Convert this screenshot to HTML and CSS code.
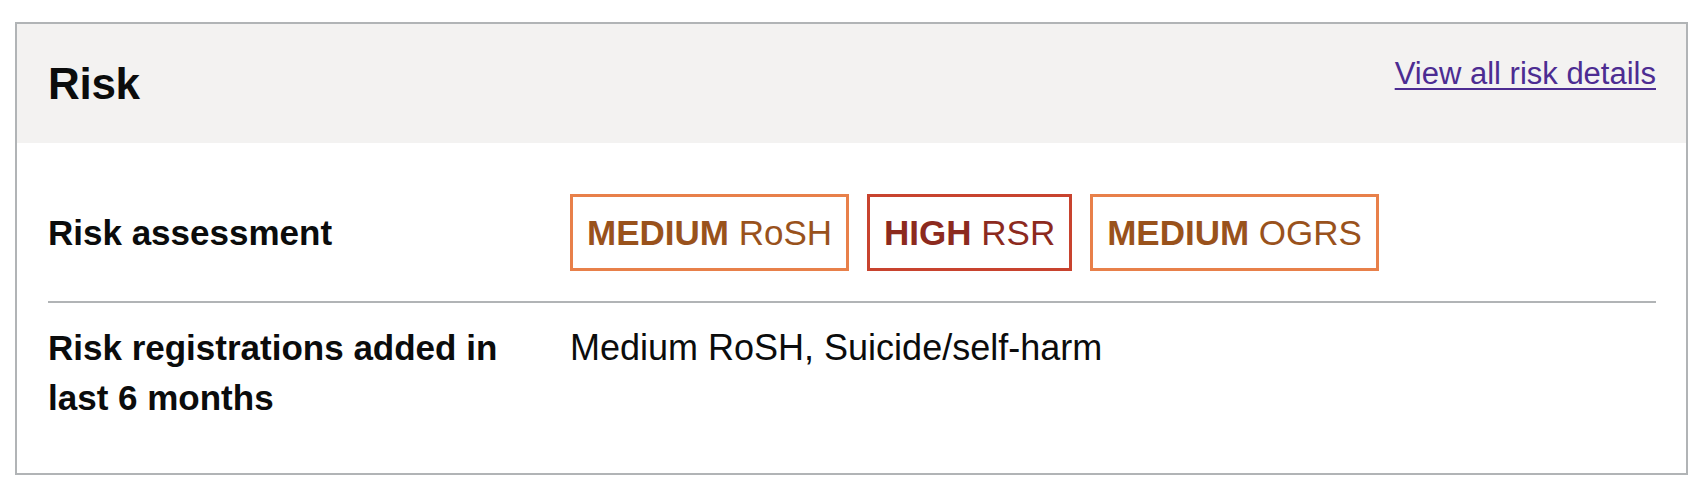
FILE: index.html
```html
<!DOCTYPE html>
<html lang="en">
<head>
<meta charset="utf-8">
<title>Risk</title>
<link rel="stylesheet" href="styles.css">
</head>
<body>
<div class="card">
  <div class="card-header">
    <h2 class="card-title">Risk</h2>
    <a class="card-link" href="#">View all risk details</a>
  </div>
  <div class="card-content">
    <dl class="summary">
      <div class="summary-row summary-row--center summary-row--first">
        <dt class="summary-key">Risk assessment</dt>
        <dd class="summary-value">
          <div class="tags">
            <span class="tag tag--medium"><strong>MEDIUM</strong> RoSH</span>
            <span class="tag tag--high"><strong>HIGH</strong> RSR</span>
            <span class="tag tag--medium"><strong>MEDIUM</strong> OGRS</span>
          </div>
        </dd>
      </div>
      <div class="summary-row summary-row--last">
        <dt class="summary-key">Risk registrations added in last 6 months</dt>
        <dd class="summary-value">Medium RoSH, Suicide/self-harm</dd>
      </div>
    </dl>
  </div>
</div>
</body>
</html>
```

FILE: styles.css
```css
* { box-sizing: border-box; }

html, body {
  margin: 0;
  padding: 0;
  background: #ffffff;
}

body {
  font-family: "Liberation Sans", Arial, sans-serif;
  color: #0b0c0c;
  padding: 22px 20px 0 15px;
}

.card {
  border: 2px solid #b1b4b6;
  background: #ffffff;
}

.card-header {
  background: #f3f2f1;
  display: flex;
  justify-content: space-between;
  align-items: flex-start;
  padding: 30px 30px 29px 31px;
}

.card-title {
  margin: 0;
  font-size: 44px;
  line-height: 60px;
  font-weight: 700;
  letter-spacing: -0.3px;
}

.card-link {
  font-size: 31px;
  line-height: 40px;
  color: #4c2c92;
  text-decoration: underline;
  text-decoration-thickness: 2px;
  text-underline-offset: 4px;
}

.card-content {
  padding: 30px 30px 30px 31px;
}

.summary {
  margin: 0;
}

.summary-row {
  display: grid;
  grid-template-columns: 522px 1fr;
  align-items: start;
  padding: 20px 0;
}

.summary-row--first {
  padding: 21px 0 30px;
  border-bottom: 2px solid #b1b4b6;
}

.summary-row--center {
  align-items: center;
}

.summary-key {
  margin: 0;
  font-size: 35px;
  line-height: 50px;
  font-weight: 700;
  padding-right: 40px;
}

.summary-value {
  margin: 0;
  font-size: 36px;
  line-height: 50px;
}

.tags {
  display: flex;
  gap: 18px;
}

.tag {
  display: inline-block;
  border: 3px solid;
  padding: 13px 14px;
  font-size: 35px;
  line-height: 45px;
  white-space: nowrap;
}

.tag strong {
  font-weight: 700;
}

.tag--medium {
  border-color: #e8804a;
  color: #99521c;
}

.tag--high {
  border-color: #c8432e;
  color: #8c2a1e;
}
```
